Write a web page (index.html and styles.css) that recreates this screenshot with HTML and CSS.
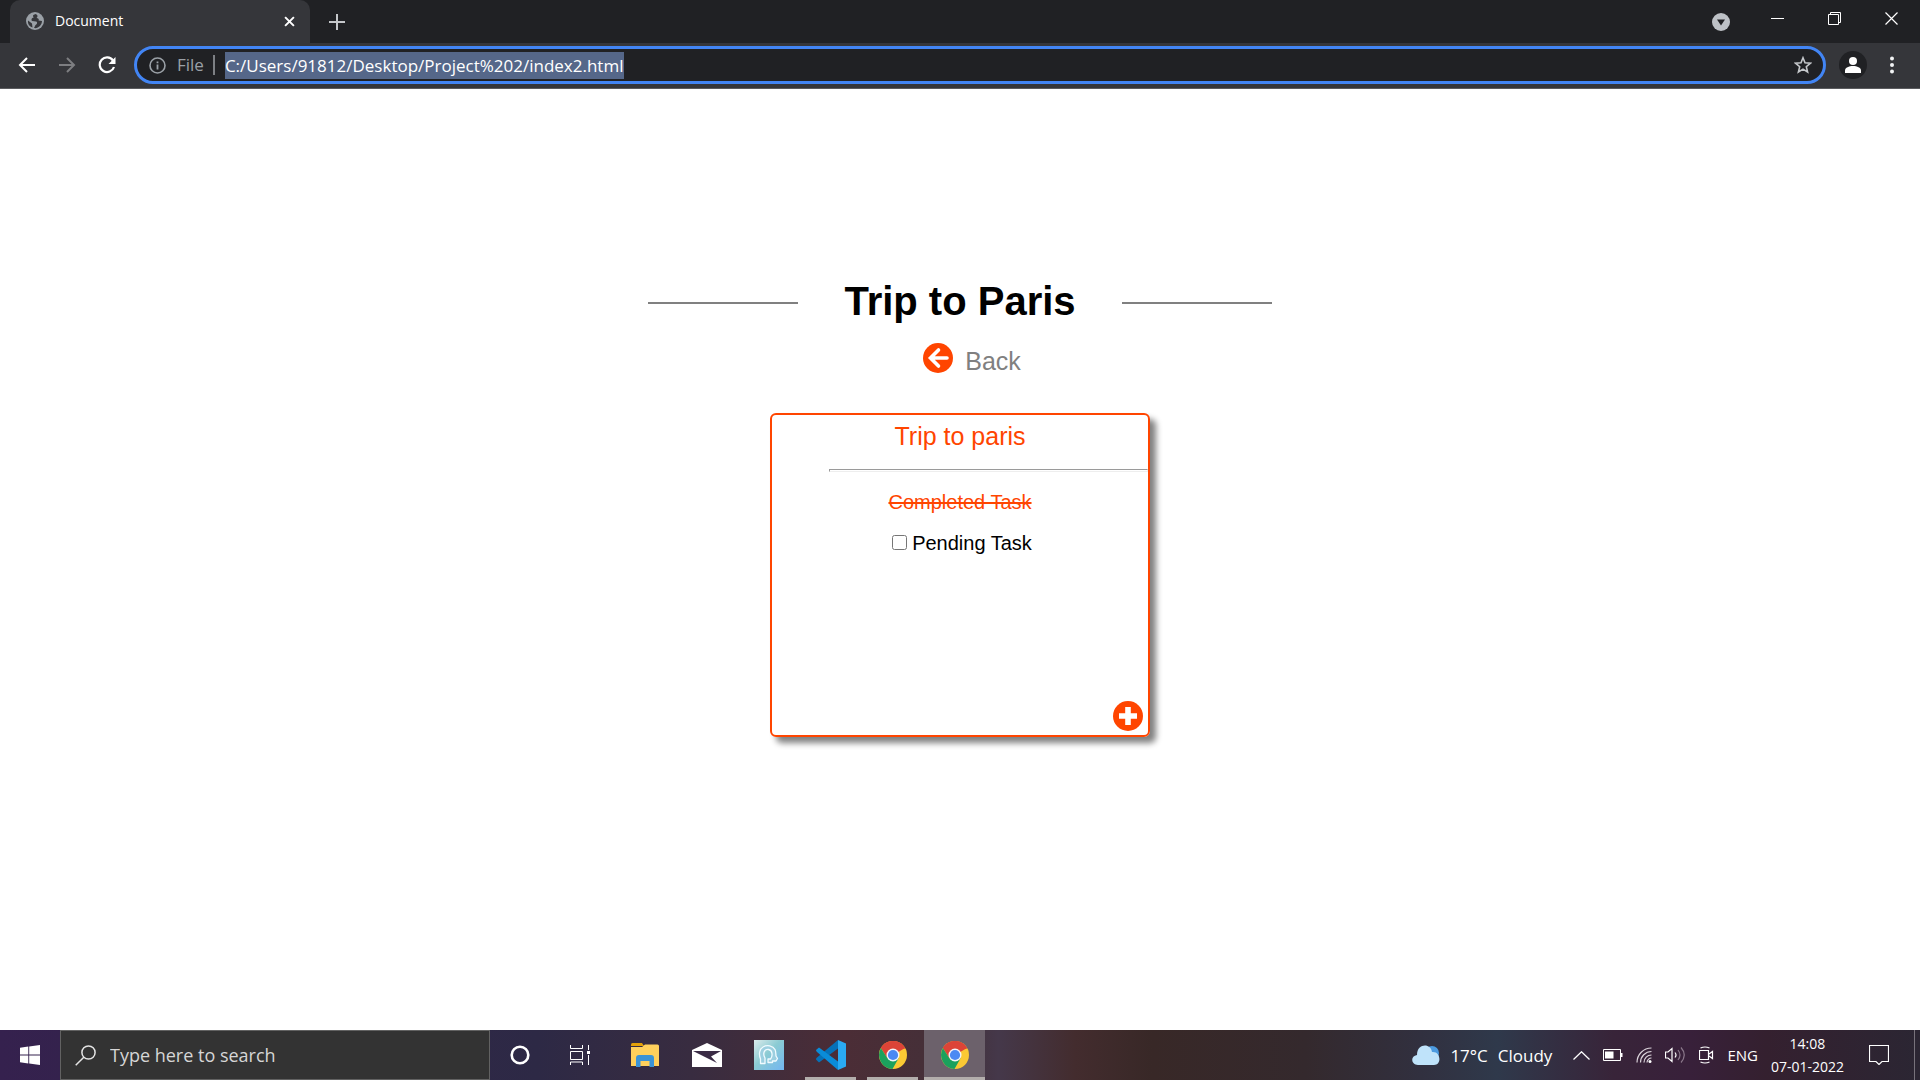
FILE: index.html
```html
<!DOCTYPE html>
<html lang="en">
<head>
<meta charset="utf-8">
<title>Document</title>
<link rel="stylesheet" href="styles.css">
</head>
<body>
<svg class="defs" aria-hidden="true">
  <symbol id="chrome-logo" viewBox="0 0 28 28">
    <circle cx="14" cy="14" r="14" fill="#fbc934"/>
    <path d="M14 14 1.9 7A14 14 0 0 1 26.1 7Z" fill="#dc4437"/>
    <path d="M14 7.500H26.400A14 14 0 0 0 1.900 7L8.400 17.200Z" fill="#dc4437"/>
    <path d="M1.900 7A14 14 0 0 0 13.500 28L19.600 17.300 8.400 17.200Z" fill="#1ba15d"/>
    <circle cx="14" cy="14" r="6.500" fill="#f3f5f9"/>
    <circle cx="14" cy="14" r="5.100" fill="#4a89f3"/>
  </symbol>
</svg>

<header class="browser">
  <div class="tab-strip">
    <div class="tab">
      <svg width="18" height="18" viewBox="0 0 18 18"><circle cx="9" cy="9" r="9" fill="#9aa0a6"/><path d="M9.500 2C6.500 3 6.500 4 8 5.500 5.500 5.500 5 8 6 9L10 9.500C12 10 11 12.500 9.500 13L8 16C12 17 16 13 16 9L12.500 8.500C13.500 7 12 6 10.500 6 12 4.500 12 3 9.500 2ZM2 8.500 6 11.500 6.500 15.500C3.500 14.500 1.500 12 2 8.500Z" fill="#35363a"/></svg>
      <span class="tab-title">Document</span>
      <button class="icon-btn" aria-label="Close tab"><svg width="11" height="11" viewBox="0 0 10 10"><path d="M1 1 9 9M9 1 1 9" stroke="#fff" stroke-width="1.800"/></svg></button>
    </div>
    <button class="icon-btn new-tab" aria-label="New tab"><svg width="16" height="16" viewBox="0 0 16 16"><path d="M8 0V16M0 8H16" stroke="#c4c7ca" stroke-width="2"/></svg></button>
    <div class="window-controls">
      <button class="icon-btn" aria-label="Search tabs"><svg width="18" height="18" viewBox="0 0 18 18"><circle cx="9" cy="9" r="9" fill="#bdc1c6"/><path d="M5 6.500H13L9 12.500Z" fill="#202124"/></svg></button>
      <button class="icon-btn" aria-label="Minimize"><svg width="13" height="13" viewBox="0 0 13 13"><path d="M0 6.500H13" stroke="#fff"/></svg></button>
      <button class="icon-btn" aria-label="Restore"><svg width="13" height="13" viewBox="0 0 13 13"><path d="M.5 2.500H10.500V12.500H.5ZM2.500 2.500V.5H12.500V10.500H10.500" fill="none" stroke="#fff"/></svg></button>
      <button class="icon-btn" aria-label="Close"><svg width="13" height="13" viewBox="0 0 13 13"><path d="M.5.5 12.500 12.500M12.500.5.5 12.500" stroke="#fff" stroke-width="1.200"/></svg></button>
    </div>
  </div>
  <div class="toolbar">
    <button class="icon-btn" aria-label="Back"><svg width="18" height="16" viewBox="0 0 18 16"><path d="M17 8H2M9 1 2 8 9 15" fill="none" stroke="#fff" stroke-width="2"/></svg></button>
    <button class="icon-btn" aria-label="Forward"><svg width="18" height="16" viewBox="0 0 18 16"><path d="M1 8H16M9 1 16 8 9 15" fill="none" stroke="#7d7e81" stroke-width="2"/></svg></button>
    <button class="icon-btn" aria-label="Reload"><svg width="18" height="18" viewBox="0 0 18 18"><path d="M15 4.500A7.300 7.300 0 1 0 16 11" fill="none" stroke="#fff" stroke-width="2.200"/><path d="M17.500 1V8H10.500Z" fill="#fff"/></svg></button>
    <div class="omnibox">
      <svg width="17" height="17" viewBox="0 0 17 17"><circle cx="8.500" cy="8.500" r="7.500" fill="none" stroke="#9aa0a6" stroke-width="1.600"/><path d="M8.500 7.500V12.500M8.500 4.500V6.200" stroke="#9aa0a6" stroke-width="1.800"/></svg>
      <label class="scheme" for="url">File</label>
      <input class="url" id="url" type="text" value="C:/Users/91812/Desktop/Project%202/index2.html">
      <button class="icon-btn star" aria-label="Bookmark this page"><svg width="18" height="18" viewBox="0 0 18 18"><path d="M9 1.800 11 6.800 16.400 7.200 12.300 10.700 13.600 16 9 13.100 4.400 16 5.700 10.700 1.600 7.200 7 6.800Z" fill="none" stroke="#c4c7ca" stroke-width="1.600"/></svg></button>
    </div>
    <button class="icon-btn profile" aria-label="Profile"><svg width="28" height="28" viewBox="0 0 28 28"><circle cx="14" cy="14" r="14" fill="#202124"/><circle cx="14" cy="10" r="4" fill="#fff"/><path d="M6 22V19.500C6 16.500 10 15 14 15S22 16.500 22 19.500V22Z" fill="#fff"/></svg></button>
    <button class="icon-btn menu" aria-label="Menu"><svg width="4" height="18" viewBox="0 0 4 18"><g fill="#f1f3f4"><circle cx="2" cy="2.500" r="2"/><circle cx="2" cy="9" r="2"/><circle cx="2" cy="15.500" r="2"/></g></svg></button>
  </div>
</header>

<main class="page">
  <div class="heading">
    <span class="rule"></span>
    <h1>Trip to Paris</h1>
    <span class="rule"></span>
  </div>
  <a class="back" href="#">
    <svg width="30" height="30" viewBox="0 0 30 30"><circle cx="15" cy="15" r="15" fill="#ff4500"/><path d="M24 15H9M15.500 7 7.500 15 15.500 23" fill="none" stroke="#fff" stroke-width="3.600" stroke-linecap="round"/></svg>
    <span>Back</span>
  </a>
  <section class="card">
    <h2>Trip to paris</h2>
    <hr>
    <p class="task done">Completed Task</p>
    <label class="task pending"><input type="checkbox">Pending Task</label>
    <button class="icon-btn add" aria-label="Add task"><svg width="30" height="30" viewBox="0 0 30 30"><circle cx="15" cy="15" r="15" fill="#ff4500"/><path d="M15 6V24M6 15H24" stroke="#fff" stroke-width="5.600"/></svg></button>
  </section>
</main>

<footer class="taskbar">
  <button class="start" aria-label="Start"><svg width="20" height="20" viewBox="0 0 20 20"><path d="M0 2.700 8.300 1.500V9.500H0ZM9.200 1.400 20 0V9.500H9.200ZM0 10.400H8.300V18.500L0 17.300ZM9.200 10.400H20V20L9.200 18.600Z" fill="#fff"/></svg></button>
  <div class="search">
    <svg width="21" height="21" viewBox="0 0 21 21"><circle cx="13.500" cy="7.500" r="6.600" fill="none" stroke="#e4e4e4" stroke-width="1.500"/><path d="M8.800 12.200.7 20.300" stroke="#e4e4e4" stroke-width="1.500"/></svg>
    <input type="text" aria-label="Search" placeholder="Type here to search">
  </div>
  <nav class="apps">
    <button class="system" aria-label="Cortana"><svg width="20" height="20" viewBox="0 0 20 20"><circle cx="10" cy="10" r="8.300" fill="none" stroke="#fff" stroke-width="2.600"/></svg></button>
    <button class="system" aria-label="Task View"><svg width="20" height="20" viewBox="0 0 20 20"><path d="M.5 0V3.500H12.500V0M.5 6.500H12.500V14.500H.5ZM.5 20V17H12.500V20M18.500 0V5M18.500 10V20" fill="none" stroke="#fff"/><path d="M17 6H20V9H17Z" fill="#fff"/></svg></button>
    <button aria-label="File Explorer"><svg width="28" height="24" viewBox="0 0 28 24"><path d="M0 1.500Q0 0 1.500 0H11L13 3H0Z" fill="#e3a008"/><path d="M0 4H11L14 1.500H26.500Q28 1.500 28 3V23H0Z" fill="#ffd05c"/><path d="M5 24V15Q5 12 8 12H20Q23 12 23 15V24H18.500V18H9.500V24Z" fill="#3b93d6"/></svg></button>
    <button aria-label="Mail"><svg width="30" height="24" viewBox="0 0 30 24"><path d="M0 7 15 0 30 7V24H0Z" fill="#fff"/><path d="M1 8H29L19 13.500 25 20 1 8Z" fill="#3a2b45"/></svg></button>
    <button aria-label="Assistant"><svg width="30" height="30" viewBox="0 0 30 30"><defs><linearGradient id="sky" x2="1" y2="1"><stop stop-color="#dcebeb"/><stop offset=".45" stop-color="#8bcbd3"/><stop offset="1" stop-color="#72b6f2"/></linearGradient></defs><path d="M0 0H30V30H0Z" fill="url(#sky)"/><path d="M6.500 23.500V19C4.500 14 5.500 9 9 7 13 4.500 19 5.500 21 9.500 22 11.500 21.800 14 22 16L23.500 18.500 22 21H18.500V22.500H14V19H16.500C19 16 18.500 10 14.500 9.500 10 9 8.500 14 11 18V23.500Z" fill="#9ccfe0" stroke="#f1fbff" stroke-width="1.300" stroke-linejoin="round"/></svg></button>
    <button class="open" aria-label="Visual Studio Code"><svg width="30" height="30" viewBox="0 0 30 30"><path d="M0 19.500Q0 18 1 17.500L22 0V8.500L3 22.500Z" fill="#0571b8"/><path d="M0 10 3 7.500 22 21.500V30L1 12Q0 11 0 10Z" fill="#0a8cd8"/><path d="M22 0 30 3.500V26.500L22 30Z" fill="#2aaaf2"/></svg></button>
    <button class="open" aria-label="Chrome"><svg width="28" height="28"><use href="#chrome-logo"/></svg></button>
    <button class="open active" aria-label="Chrome, current window"><svg width="28" height="28"><use href="#chrome-logo"/></svg></button>
  </nav>
  <div class="tray">
    <div class="weather">
      <svg width="28" height="20" viewBox="0 0 28 20"><circle cx="20" cy="8" r="7" fill="#4c9be0"/><path d="M6 20C-1 20-2 11 5 10 5-2 19-2 20 7 29 6 30 20 22 20Z" fill="#bfe3fa"/></svg>
      <span>17°C</span><span>Cloudy</span>
    </div>
    <svg width="17" height="9" viewBox="0 0 17 9"><path d="M.5 8.500 8.500.8 16.500 8.500" fill="none" stroke="#fff" stroke-width="1.300"/></svg>
    <svg width="20" height="12" viewBox="0 0 20 12"><path d="M.5.5H17.500V11.500H.5Z" fill="none" stroke="#fff"/><path d="M2 2.500H10.500V9.500H2ZM18 4H19.500V8H18Z" fill="#fff"/></svg>
    <svg width="16" height="16" viewBox="0 0 16 16"><path d="M1 15.500A14.500 14.500 0 0 1 15.500 1M4.500 15.500A11 11 0 0 1 15.500 4.500M8 15.500A7.500 7.500 0 0 1 15.500 8M11 15.500A4.500 4.500 0 0 1 15.500 11" fill="none" stroke="#dcd5dc" stroke-width="1.200"/><circle cx="14" cy="14.500" r="1.500" fill="#fff"/></svg>
    <svg width="21" height="18" viewBox="0 0 21 18"><path d="M.5 6H3L7 2.500V15.500L3 12H.5ZM10 6.500Q12 9 10 11.500" fill="none" stroke="#fff" stroke-width="1.200"/><path d="M13 4Q17 9 13 14M16 1.500Q22.500 9 16 16.500" fill="none" stroke="#8b788b" stroke-width="1.200"/></svg>
    <svg width="15" height="18" viewBox="0 0 15 18"><path d="M.5 4.500H9.500V13.500H.5ZM10 8 13.500 5.500V12.500L10 10M1.500 2Q6 0 10.500 2M1.500 16Q6 18 10.500 16" fill="none" stroke="#fff" stroke-width="1.200"/></svg>
    <span class="lang">ENG</span>
    <div class="clock"><span>14:08</span><span>07-01-2022</span></div>
    <button class="icon-btn notify" aria-label="Notifications"><svg width="20" height="20" viewBox="0 0 20 20"><path d="M.5.500H19.500V16.500H13L10 19.500 7 16.500H.5Z" fill="none" stroke="#fff" stroke-width="1.200"/></svg></button>
    <span class="show-desktop"></span>
  </div>
</footer>
</body>
</html>
```
FILE: styles.css
```css
* { box-sizing: border-box; }

body {
  margin: 0;
  min-height: 100vh;
  display: flex;
  flex-direction: column;
  background: #fff;
  font-family: "Liberation Sans", Arial, sans-serif;
}

.defs { display: none; }
svg { display: block; flex-shrink: 0; }

button {
  display: flex;
  align-items: center;
  justify-content: center;
  padding: 0;
  border: 0;
  background: none;
}

/* Browser window */
.browser, .taskbar { font-family: "Open Sans", "Noto Sans", sans-serif; color: #fff; }
.browser { background: #202124; }

.tab-strip { display: flex; height: 43px; padding-left: 10px; }

.tab {
  display: flex;
  align-items: center;
  width: 300px;
  padding: 0 15px 1px 16px;
  gap: 11px;
  background: #35363a;
  border-radius: 10px 10px 0 0;
}
.tab-title { flex: 1; font-size: 14px; line-height: 20px; }
.new-tab { margin-left: 19px; }

.window-controls { display: flex; margin-left: auto; }
.window-controls .icon-btn { width: 57px; padding-bottom: 6px; }
.window-controls .icon-btn:first-child { padding-bottom: 0; }

.toolbar {
  display: flex;
  align-items: center;
  height: 46px;
  padding: 0 26px 1px 18px;
  gap: 22px;
  background: #35363a;
  border-bottom: 1px solid #5b5c5f;
}

.omnibox {
  flex: 1;
  display: flex;
  align-items: center;
  height: 38px;
  margin-left: -4px;
  padding: 0 11px 0 12px;
  border: 3px solid #4285f4;
  border-radius: 19px;
  background: #202124;
  font-size: 17px;
}
.scheme {
  margin: 0 10px 0 11px;
  padding-right: 9px;
  border-right: 2px solid #7d8084;
  line-height: 20px;
  color: #9aa0a6;
}
.url {
  field-sizing: content;
  height: 27px;
  padding: 0 1px 0 0;
  border: 0;
  background: #556789;
  color: #fff;
  font: inherit;
}
.star { margin-left: auto; }
.profile { margin-left: -9px; }
.menu { margin-left: 1px; }

/* Trip page */
.page {
  flex: 1;
  display: flex;
  flex-direction: column;
  align-items: center;
  padding-top: 188px;
}

.heading { display: flex; align-items: center; gap: 46px; }
.heading h1 { margin: 0; font-size: 40px; line-height: 48px; }
.rule { width: 150px; height: 2px; margin-top: 4px; background: #808080; }

.back {
  display: flex;
  gap: 12px;
  margin-top: 18px;
  padding-left: 24px;
  color: #808080;
  font-size: 25px;
  line-height: 36px;
  text-decoration: none;
}

.card {
  display: flex;
  flex-direction: column;
  width: 380px;
  min-height: 324px;
  margin-top: 34px;
  border: 2px solid #ff4500;
  border-radius: 6px;
  box-shadow: 6px 6px 6px #808080;
  text-align: center;
}
.card h2 {
  margin: 0;
  color: #ff4500;
  font-size: 25px;
  font-weight: 400;
  line-height: 43px;
}
.card hr {
  width: 319px;
  height: 3px;
  margin: 11px 0 10px auto;
  border: 1px solid #eee;
  border-top-color: #9a9a9a;
  border-left-color: #9a9a9a;
}
.task {
  display: flex;
  align-items: center;
  justify-content: center;
  margin: 0;
  font-size: 20px;
  line-height: 41px;
}
.task input { width: 15px; height: 15px; margin: 0 5px 3px 0; }
.pending { padding-left: 4px; }
.done { color: #ff4500; text-decoration: line-through; }
.add { align-self: flex-end; margin: auto 5px 4px; }

/* Desktop taskbar */
.taskbar {
  display: flex;
  height: 50px;
  background: linear-gradient(90deg, #35214e 0%, #2d2945 28%, #382c40 36%, #4b2d36 44%, #433039 50%, #45384a 52%, #432c2e 56%, #382827 60%, #34292d 68%, #31303f 74%, #2f394b 78%, #382439 84%, #38203a 88%, #34202f 92%, #2b2633 100%);
}
.start { width: 60px; }

.search {
  display: flex;
  align-items: center;
  width: 430px;
  padding: 0 14px;
  gap: 14px;
  border: 1px solid #626262;
  background: #333;
}
.search input {
  flex: 1;
  min-width: 0;
  padding: 0;
  border: 0;
  background: none;
  font: 18px "Open Sans", sans-serif;
}
.search input::placeholder { color: #d6d6d6; }

.apps { display: flex; gap: 1px; }
.apps button { width: 61px; }
.apps .system { width: 59px; }
.apps .system + .system { margin-right: 4px; }
.apps .open { background: linear-gradient(#b3aeac, #b3aeac) center bottom / 51px 3px no-repeat; }
.apps .active { background-color: #6c616b; background-size: 100% 3px; }

.tray { display: flex; align-items: center; gap: 13px; margin-left: auto; }
.weather { display: flex; align-items: center; gap: 10px; margin-right: 8px; font-size: 17px; }
.lang { font-size: 15px; }
.clock { display: flex; flex-direction: column; text-align: center; font-size: 14px; line-height: 23px; }
.notify { margin-left: 12px; }
.show-desktop { width: 6px; height: 50px; margin-left: 12px; border-left: 1px solid #77727b; }
```
